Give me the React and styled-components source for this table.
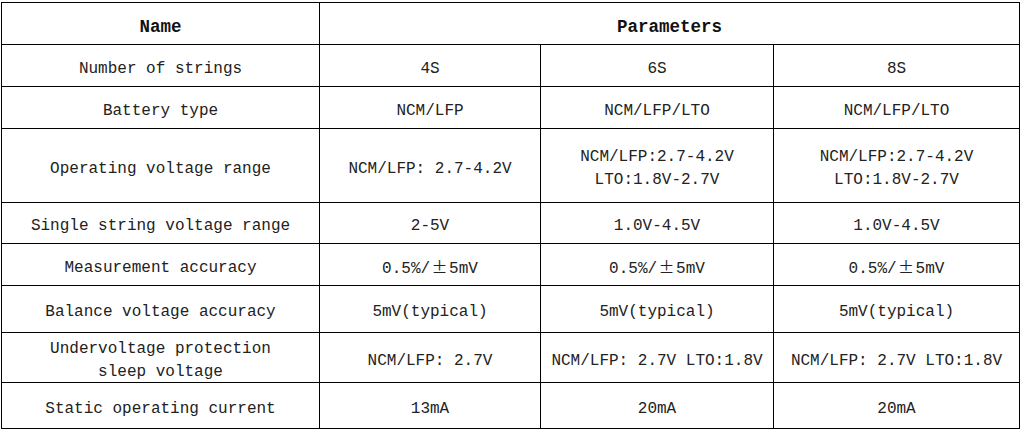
import React from "react";
import styled, { createGlobalStyle } from "styled-components";

const Global = createGlobalStyle`
  html, body { margin: 0; padding: 0; background: #fff; }
  body { font-family: "Liberation Mono", "DejaVu Sans Mono", monospace; }
`;

const Page = styled.div`
  padding: 2px 0 0 1px;
`;

const Sheet = styled.div`
  display: grid;
  width: 1019px;
  box-sizing: border-box;
  grid-template-columns: 317px 220px 232px 245px;
  grid-template-rows: 41px 41px 41px 73px 40px 41px 46px 49px 45px;
  gap: 1px;
  padding: 1px;
  background: #000;
`;

const Cell = styled.div`
  background: #fff;
  display: flex;
  flex-direction: column;
  align-items: center;
  justify-content: center;
  text-align: center;
  white-space: nowrap;
  font-family: "Liberation Mono", "DejaVu Sans Mono", monospace;
  font-size: 16px;
  line-height: 23px;
  color: #222;
  padding-top: 7px;
  box-sizing: border-box;
`;

const HeaderCell = styled(Cell)`
  font-weight: bold;
  font-size: 17.5px;
  color: #111;
  padding-top: 7px;
  grid-column: ${(p) => p.$span || "auto"};
`;

const Wide = styled.span`
  font-family: "Noto Sans CJK JP", "Liberation Mono", monospace;
  display: inline-block;
  width: 19px;
  text-align: center;
`;

const PM = () => <Wide>±</Wide>;

const rows = [
  { name: "Number of strings", vals: ["4S", "6S", "8S"] },
  { name: "Battery type", vals: ["NCM/LFP", "NCM/LFP/LTO", "NCM/LFP/LTO"] },
  {
    name: "Operating voltage range",
    vals: [
      ["NCM/LFP: 2.7-4.2V"],
      ["NCM/LFP:2.7-4.2V", "LTO:1.8V-2.7V"],
      ["NCM/LFP:2.7-4.2V", "LTO:1.8V-2.7V"],
    ],
  },
  { name: "Single string voltage range", vals: ["2-5V", "1.0V-4.5V", "1.0V-4.5V"] },
  { name: "Measurement accuracy", vals: ["pm", "pm", "pm"] },
  { name: "Balance voltage accuracy", vals: ["5mV(typical)", "5mV(typical)", "5mV(typical)"] },
  {
    name: ["Undervoltage protection", "sleep voltage"],
    vals: ["NCM/LFP: 2.7V", "NCM/LFP: 2.7V LTO:1.8V", "NCM/LFP: 2.7V LTO:1.8V"],
  },
  { name: "Static operating current", vals: ["13mA", "20mA", "20mA"] },
];

const renderContent = (v) => {
  if (v === "pm")
    return (
      <span>
        0.5%/<PM />5mV
      </span>
    );
  if (Array.isArray(v)) return v.map((line) => <span key={line}>{line}</span>);
  return v;
};

export default function App() {
  return (
    <Page>
      <Global />
      <Sheet>
        <HeaderCell>Name</HeaderCell>
        <HeaderCell $span="2 / 5">Parameters</HeaderCell>
        {rows.map((r, i) => (
          <React.Fragment key={i}>
            <Cell>{renderContent(r.name)}</Cell>
            {r.vals.map((v, j) => (
              <Cell key={j}>{renderContent(v)}</Cell>
            ))}
          </React.Fragment>
        ))}
      </Sheet>
    </Page>
  );
}
